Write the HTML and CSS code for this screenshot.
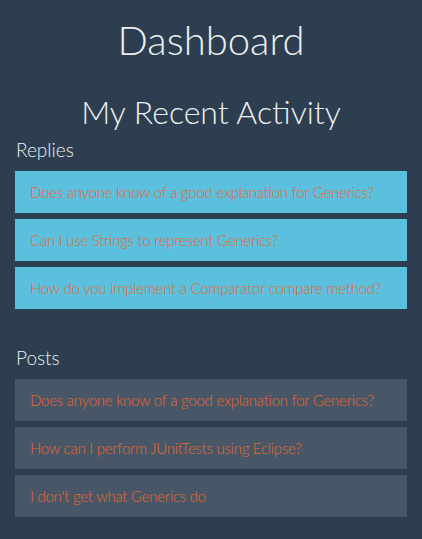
FILE: index.html
```html
<!DOCTYPE html>
<html lang="en">
<head>
<meta charset="utf-8">
<title>Dashboard</title>
<link rel="stylesheet" href="styles.css">
</head>
<body>
<main class="page">
  <h1 class="title">Dashboard</h1>
  <h2 class="subtitle">My Recent Activity</h2>
  <section class="group">
    <h3 class="group-title">Replies</h3>
    <ul class="list">
      <li class="item item-reply"><a href="#">Does anyone know of a good explanation for Generics?</a></li>
      <li class="item item-reply"><a href="#">Can I use Strings to represent Generics?</a></li>
      <li class="item item-reply"><a href="#">How do you implement a Comparator compare method?</a></li>
    </ul>
  </section>
  <section class="group group-posts">
    <h3 class="group-title">Posts</h3>
    <ul class="list">
      <li class="item item-post"><a href="#">Does anyone know of a good explanation for Generics?</a></li>
      <li class="item item-post"><a href="#">How can I perform JUnitTests using Eclipse?</a></li>
      <li class="item item-post"><a href="#">I don't get what Generics do</a></li>
    </ul>
  </section>
</main>
</body>
</html>
```
FILE: styles.css
```css
html, body {
  margin: 0;
  padding: 0;
  background: #2c3e50;
}
body {
  font-family: Lato, "Open Sans", sans-serif;
  font-weight: 300;
  color: #ecf0f1;
  min-height: 539px;
}
.page {
  padding: 0 15px 20px;
}
.title {
  margin: 18px 0 0;
  font-size: 40px;
  line-height: 44px;
  font-weight: 300;
  text-align: center;
}
.subtitle {
  margin: 31px 0 0;
  font-size: 32px;
  line-height: 38px;
  font-weight: 300;
  text-align: center;
}
.group-title {
  margin: 8px 0 10px 1px;
  font-size: 19px;
  line-height: 22px;
  font-weight: 300;
}
.group-posts {
  margin-top: 38px;
}
.list {
  list-style: none;
  margin: 0;
  padding: 0;
  display: flex;
  flex-direction: column;
  gap: 6px;
}
.item {
  height: 42px;
  display: flex;
  align-items: center;
  padding: 0 15px;
  white-space: nowrap;
}
.item a {
  color: #e8672c;
  text-decoration: none;
  font-size: 15px;
  letter-spacing: -0.25px;
}
.item-reply {
  background: #5bc0de;
}
.item-post {
  background: #485767;
}
```
